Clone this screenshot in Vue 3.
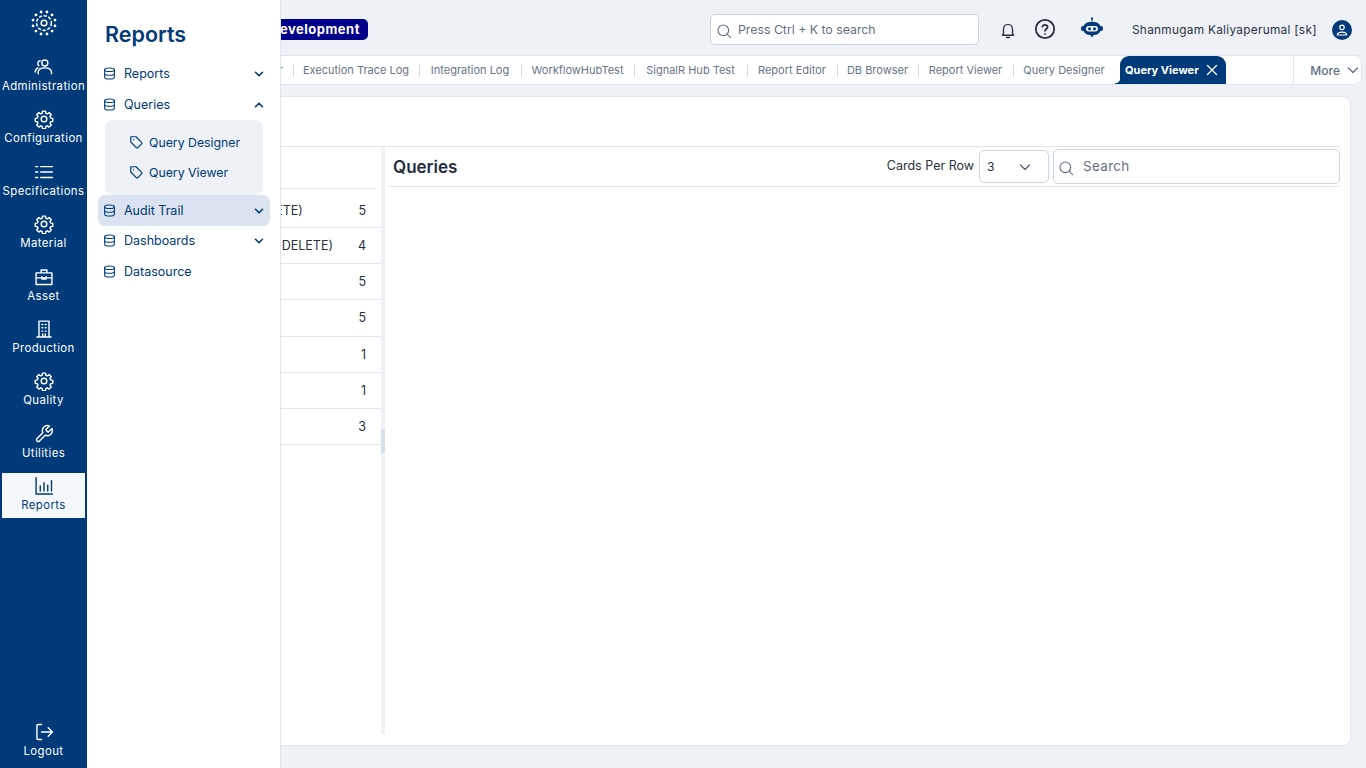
<script setup>
const dots = Array.from({ length: 12 }, (_, i) => {
  const a = (i * Math.PI) / 6 + Math.PI / 12
  return { x: 12 + 10.5 * Math.cos(a), y: 12 + 10.5 * Math.sin(a) }
})
const gear = 'M12 8.6a3.4 3.4 0 1 0 0 6.8 3.4 3.4 0 0 0 0-6.8zM10.2 2.5h3.6l.5 2.6 1.7.7 2.2-1.5 2.5 2.5-1.5 2.2.7 1.7 2.6.5v3.6l-2.6.5-.7 1.7 1.5 2.2-2.5 2.5-2.2-1.5-1.7.7-.5 2.6h-3.6l-.5-2.6-1.7-.7-2.2 1.5-2.5-2.5 1.5-2.2-.7-1.7-2.6-.5v-3.6l2.6-.5.7-1.7-1.5-2.2 2.5-2.5 2.2 1.5 1.7-.7z'
const rail = [
  { label: 'Administration', d: 'M13 3.5a3.6 3.6 0 1 1 0 7.2 3.6 3.6 0 0 1 0-7.2zM5 20v-1.5c0-3.4 3.4-5.5 8-5.5s8 2.1 8 5.500V20M7.500 4.500a3.200 3.200 0 0 0-1.600 5.800M4.800 13C2.800 13.800 1.500 15.500 1.500 18' },
  { label: 'Configuration', d: gear },
  { label: 'Specifications', d: 'M8 5.500h14M8 12h14M8 18.500h14M2 5.500h2.500M2 12h2.500M2 18.500h2.500' },
  { label: 'Material', d: gear },
  { label: 'Asset', d: 'M2.500 7h19v14h-19zM8.500 7V3.500h7V7M2.500 13h19M9.500 11.500v3h5v-3' },
  { label: 'Production', d: 'M6 2.500h12v19H6zM3.500 21.500h17M9.500 6.500h1M13.500 6.500h1M9.500 10.500h1M13.500 10.500h1M9.500 14.500h1M13.500 14.500h1M10.500 18v3.500M13.500 18v3.500' },
  { label: 'Quality', d: gear },
  { label: 'Utilities', d: 'M14.700 6.300a1 1 0 0 0 0 1.400l1.600 1.600a1 1 0 0 0 1.400 0l3.770-3.770a6 6 0 0 1-7.940 7.940l-6.910 6.910a2.120 2.120 0 0 1-3-3l6.910-6.910a6 6 0 0 1 7.940-7.940l-3.760 3.760z' },
  { label: 'Reports', d: 'M2.500 2v19.500H22M7.500 12v6M12 8v10M16.500 11v7M21 5.500V18', active: true },
]
const tabs = [
  { label: 'Execution Trace Log', w: 126 },
  { label: 'Integration Log', w: 102 },
  { label: 'WorkflowHubTest', w: 113 },
  { label: 'SignalR Hub Test', w: 113 },
  { label: 'Report Editor', w: 90 },
  { label: 'DB Browser', w: 81 },
  { label: 'Report Viewer', w: 95 },
  { label: 'Query Designer', w: 102 },
]
const rows = [
  { name: '(DELETE)', n: 5 },
  { name: '(NOT DELETE)', n: 4 },
  { name: '', n: 5 }, { name: '', n: 5 }, { name: '', n: 1 }, { name: '', n: 1 }, { name: '', n: 3 },
]
const menuTop = [{ label: 'Reports', chev: 'down' }, { label: 'Queries', chev: 'up' }]
const menuBottom = [
  { label: 'Audit Trail', chev: 'down', active: true },
  { label: 'Dashboards', chev: 'down' },
  { label: 'Datasource' },
]
const subs = ['Query Designer', 'Query Viewer']
</script>

<template>
  <div class="app">
    <nav class="rail">
      <div class="logo">
        <svg width="26" height="26" viewBox="0 0 24 24" fill="none" stroke="#fff" stroke-width="1.400">
          <circle v-for="(p, i) in dots" :key="i" :cx="p.x" :cy="p.y" r="1.300" fill="#fff" stroke="none" />
          <circle cx="12" cy="12" r="2.600" />
          <circle cx="12" cy="12" r="6.800" stroke-dasharray="3 1.500" />
        </svg>
      </div>
      <a v-for="r in rail" :key="r.label" class="rail-item" :class="{ on: r.active }">
        <svg width="20" height="20" viewBox="0 0 24 24" fill="none" stroke="currentColor" stroke-width="1.700" stroke-linecap="round" stroke-linejoin="round"><path :d="r.d" /></svg>
        <span>{{ r.label }}</span>
      </a>
      <a class="rail-item logout">
        <svg width="20" height="20" viewBox="0 0 24 24" fill="none" stroke="currentColor" stroke-width="1.700" stroke-linecap="round" stroke-linejoin="round"><path d="M9 3H5a1.500 1.500 0 0 0-1.500 1.500v15A1.500 1.500 0 0 0 5 21h4M9 12h13M17 7l5 5-5 5" /></svg>
        <span>Logout</span>
      </a>
    </nav>

    <main class="main">
      <header class="top">
        <span class="badge">Development</span>
        <div class="kbar">
          <svg class="mag" width="16" height="16" viewBox="0 0 24 24" fill="none" stroke="#5f6f86" stroke-width="1.700" stroke-linecap="round"><circle cx="11" cy="11" r="8" /><path d="M17 17l5 5" /></svg>
          <span>Press Ctrl + K to search</span>
        </div>
        <svg class="ic-bell" width="18" height="18" viewBox="0 0 24 24" fill="none" stroke="#26323f" stroke-width="1.800" stroke-linecap="round" stroke-linejoin="round"><path d="M6 17V10.500a6 6 0 0 1 12 0V17l1.500 2h-15zM10 22h4" /></svg>
        <svg class="ic-help" width="22" height="22" viewBox="0 0 24 24" fill="none" stroke="#26323f" stroke-width="2" stroke-linecap="round" stroke-linejoin="round"><circle cx="12" cy="12" r="10" /><path d="M9.200 9.300a2.900 2.900 0 0 1 5.600.9c0 1.900-2.800 2.300-2.800 3.800M12 17.500h.01" /></svg>
        <svg class="ic-bot" width="22" height="22" viewBox="0 0 22 22"><path d="M11 0.500v4" stroke="#003a78" stroke-width="1.200" /><circle cx="11" cy="1.500" r="1" fill="#003a78" /><rect x="2" y="5" width="18" height="13" rx="6.500" fill="#003a78" /><rect y="9" width="22" height="5" rx="2" fill="#003a78" /><path d="M9 17.500h4L11 20.500z" fill="#003a78" /><rect x="5" y="9" width="12" height="5.500" rx="2.700" fill="#eef1f6" /><circle cx="8.500" cy="11.700" r="1.500" fill="#003a78" /><circle cx="13.500" cy="11.700" r="1.500" fill="#003a78" /></svg>
        <span class="user">Shanmugam Kaliyaperumal [sk]</span>
        <span class="avatar">
          <svg width="14" height="14" viewBox="0 0 24 24" fill="none" stroke="#fff" stroke-width="2" stroke-linecap="round"><circle cx="12" cy="7.500" r="3.800" /><path d="M4 20.500c0-3.500 3.500-5 8-5s8 1.500 8 5z" /></svg>
        </span>
      </header>

      <div class="tabs">
        <div class="tab-list">
          <span class="tab">Query Designer</span>
          <span v-for="t in tabs" :key="t.label" class="tab" :style="{ width: t.w + 'px' }">{{ t.label }}</span>
          <span class="tab active">Query Viewer
            <svg width="12" height="12" viewBox="0 0 12 12" stroke="#fff" stroke-width="1.300" stroke-linecap="round"><path d="M1.500 1.500l9 9M10.500 1.500l-9 9" /></svg>
          </span>
        </div>
        <div class="more">More
          <svg width="12" height="12" viewBox="0 0 12 12" fill="none" stroke="#5f6f86" stroke-width="1.300" stroke-linecap="round" stroke-linejoin="round"><path d="M1.500 4l4.500 4.500L10.500 4" /></svg>
        </div>
      </div>

      <section class="card">
        <div class="card-head"></div>
        <div class="card-body">
          <div class="left">
            <div class="left-head"></div>
            <div v-for="(r, i) in rows" :key="i" class="row" :class="{ first: i === 0 }">
              <span class="row-name">{{ r.name }}</span>
              <span class="row-n">{{ r.n }}</span>
            </div>
          </div>
          <div class="splitter"><i></i></div>
          <div class="right">
            <div class="right-head">
              <h2>Queries</h2>
              <label>Cards Per Row</label>
              <div class="select">
                <span>3</span>
                <svg width="12" height="12" viewBox="0 0 12 12" fill="none" stroke="#4d5d74" stroke-width="1.200" stroke-linecap="round" stroke-linejoin="round"><path d="M1.500 4l4.500 4.500L10.500 4" /></svg>
              </div>
              <div class="search">
                <svg class="mag" width="16" height="16" viewBox="0 0 24 24" fill="none" stroke="#5f6f86" stroke-width="1.700" stroke-linecap="round"><circle cx="11" cy="11" r="8" /><path d="M17 17l5 5" /></svg>
                <span>Search</span>
              </div>
            </div>
          </div>
        </div>
      </section>
    </main>

    <aside class="flyout">
      <h1>Reports</h1>
      <template v-for="m in menuTop" :key="m.label">
        <a class="menu"><svg class="db" width="13" height="13" viewBox="0 0 24 24" fill="none" stroke="currentColor" stroke-width="2" stroke-linecap="round"><ellipse cx="12" cy="5" rx="9" ry="3.300" /><path d="M3 5v14c0 1.800 4 3.300 9 3.300s9-1.500 9-3.300V5M3 12c0 1.800 4 3.300 9 3.300s9-1.500 9-3.300" /></svg>
          <span>{{ m.label }}</span>
          <svg class="chev" :class="m.chev" width="10" height="10" viewBox="0 0 10 10" fill="none" stroke="currentColor" stroke-width="1.600" stroke-linecap="round" stroke-linejoin="round"><path d="M1.500 3.300L5 6.800l3.500-3.500" /></svg>
        </a>
      </template>
      <div class="subs">
        <a v-for="s in subs" :key="s" class="sub">
          <svg width="14" height="14" viewBox="0 0 24 24" fill="none" stroke="currentColor" stroke-width="2" stroke-linecap="round" stroke-linejoin="round"><path d="M3 3h9l9.500 9.500a2 2 0 0 1 0 2.800l-6.200 6.200a2 2 0 0 1-2.800 0L3 12zM8 8h.01" /></svg>
          <span>{{ s }}</span>
        </a>
      </div>
      <a v-for="m in menuBottom" :key="m.label" class="menu" :class="{ hot: m.active }">
        <svg class="db" width="13" height="13" viewBox="0 0 24 24" fill="none" stroke="currentColor" stroke-width="2" stroke-linecap="round"><ellipse cx="12" cy="5" rx="9" ry="3.300" /><path d="M3 5v14c0 1.800 4 3.300 9 3.300s9-1.500 9-3.300V5M3 12c0 1.800 4 3.300 9 3.300s9-1.500 9-3.300" /></svg>
        <span>{{ m.label }}</span>
        <svg v-if="m.chev" class="chev" width="10" height="10" viewBox="0 0 10 10" fill="none" stroke="currentColor" stroke-width="1.600" stroke-linecap="round" stroke-linejoin="round"><path d="M1.500 3.300L5 6.800l3.500-3.500" /></svg>
      </a>
    </aside>
  </div>
</template>

<style>
html, body { margin: 0; background: #eef1f6; }
</style>

<style scoped>
.app { display: flex; height: 768px; width: 1366px; overflow: hidden; position: relative; font-family: Inter, "Noto Sans", sans-serif; background: #eef1f6; color: #26323f; }

.rail { width: 87px; flex: none; background: #003a78; color: #fff; display: flex; flex-direction: column; align-items: center; padding-top: 10px; box-sizing: border-box; }
.logo { height: 26px; margin-bottom: 21px; }
.rail-item { width: 83px; height: 52.400px; flex: none; display: flex; flex-direction: column; align-items: center; justify-content: flex-start; gap: 1px; font-size: 11.400px; line-height: 16px; letter-spacing: 0.400px; white-space: nowrap; box-sizing: border-box; }
.rail-item.on { background: #f5f8fb; color: #003a78; height: 45px; margin-top: -3px; padding-top: 3px; }
.logout { margin-top: auto; margin-bottom: 9px; height: auto; }

.main { flex: 1; min-width: 0; display: flex; flex-direction: column; }
.top { height: 55px; flex: none; display: flex; align-items: center; box-sizing: border-box; padding-top: 4px; position: relative; }
.badge { margin-left: 175px; background: #00008b; color: #fff; height: 21px; width: 106px; border-radius: 5px; font-size: 13px; font-weight: 700; line-height: 21px; text-align: center; letter-spacing: 0.500px; }
.kbar { margin-left: 342px; width: 269px; height: 31px; box-sizing: border-box; background: #fff; border: 1px solid #c9d4e6; border-radius: 5px; display: flex; align-items: center; gap: 6px; padding-left: 5px; font-size: 12.300px; color: #5f6f86; }
.kbar span { margin-top: -1px; }
.mag { margin-top: 3px; flex: none; }
.ic-bell { margin-left: 20px; }
.ic-help { margin-left: 17px; margin-top: -1px; }
.ic-bot { margin-left: 25px; margin-top: -3px; }
.user { margin-left: 29px; font-size: 11.800px; letter-spacing: 0.300px; color: #26323f; white-space: nowrap; width: 190px; }
.avatar { margin-left: 10px; width: 20px; height: 20px; border-radius: 50%; background: #003a78; display: flex; align-items: center; justify-content: center; }

.tabs { margin-right: 4px; height: 30px; flex: none; box-sizing: border-box; background: #fff; border: 1px solid #dfe5ee; border-radius: 8px; display: flex; justify-content: space-between; overflow: hidden; }
.tab-list { display: flex; align-items: stretch; justify-content: flex-end; width: 1138px; flex: none; }
.tab { display: flex; align-items: center; justify-content: center; flex: none; box-sizing: border-box; font-size: 11px; color: #66758b; padding: 0 10px 1px; white-space: nowrap; position: relative; }
.tab::before { content: ""; position: absolute; left: 0; top: 8px; height: 13px; width: 1px; background: #d5dce6; }
.tab.active { background: #003a78; color: #fff; font-weight: 700; font-size: 11px; border-radius: 9px 9px 0 0; padding: 0 8px 1px 5px; gap: 7px; margin-left: 5px; width: 106px; justify-content: flex-start; }
.tab.active::before { display: none; }
.tab.active::after { content: ""; position: absolute; left: -5px; bottom: 0; width: 5px; height: 6px; background: radial-gradient(circle at 0 0, #fff 5px, #003a78 5.500px); }
.more { width: 68px; box-sizing: border-box; border-left: 1px solid #dfe5ee; display: flex; align-items: center; justify-content: flex-end; gap: 7px; padding-right: 2px; font-size: 12px; font-weight: 500; color: #5f6f86; }

.card { margin: 11px 15px 22px 8px; flex: 1; min-height: 0; background: #fff; border: 1px solid #dfe5ee; border-radius: 8px; display: flex; flex-direction: column; padding-right: 10px; }
.card-head { height: 49px; flex: none; border-bottom: 1px solid #dfe5ee; }
.card-body { flex: 1; min-height: 0; display: flex; padding-bottom: 11px; }
.left { width: 285px; flex: none; }
.left-head { height: 41px; border-bottom: 1px solid #dfe5ee; margin-right: 5px; }
.row { height: 36.200px; box-sizing: border-box; border-bottom: 1px solid #dfe5ee; display: flex; align-items: center; justify-content: space-between; padding: 0 15px 0 151px; font-size: 12.500px; color: #26323f; }
.row.first { height: 39px; padding-top: 4px; }
.row-name { white-space: nowrap; }
.splitter { width: 4px; flex: none; background: #eef1f6; position: relative; display: flex; align-items: center; }
.splitter i { display: block; width: 4px; height: 24px; background: #d6e0ec; }
.right { flex: 1; min-width: 0; margin-left: 3px; }
.right-head { height: 40px; box-sizing: border-box; border-bottom: 1px solid #dfe5ee; display: flex; align-items: center; padding-left: 5px; }
.right-head h2 { margin: 0 auto 0 0; font-size: 17px; font-weight: 600; color: #1f2d3d; }
.right-head label { font-size: 12.500px; color: #26323f; margin: -2px 5px 0 0; }
.select { width: 70px; height: 33px; box-sizing: border-box; border: 1px solid #c9d4e6; border-radius: 5px; display: flex; align-items: center; justify-content: space-between; padding: 0 17px 0 7px; font-size: 12px; color: #26323f; }
.search { width: 287px; height: 35px; margin-left: 4px; box-sizing: border-box; border: 1px solid #c9d4e6; border-radius: 5px; display: flex; align-items: center; gap: 9px; padding-left: 4px; font-size: 13.500px; letter-spacing: 0.300px; color: #5f6f86; }
.search span { margin-top: -2px; }

.flyout { position: absolute; left: 87px; top: 0; bottom: 0; width: 194px; box-sizing: border-box; background: #fff; border-right: 1px solid #dfe5ee; padding: 19px 10px 0 11px; color: #003a78; }
.flyout h1 { margin: 0 0 9px 7px; font-size: 21.500px; line-height: 30px; font-weight: 600; }
.menu { display: flex; align-items: center; height: 31px; padding: 0 6px 0 5px; gap: 8px; font-size: 12.500px; border-radius: 7px; }
.menu .chev { margin-left: auto; }
.chev.up { transform: rotate(180deg); }
.menu.hot { background: #dae3ef; }
.menu.hot + .menu { height: 29px; margin-bottom: 1px; }
.subs { margin: 0 7px; height: 75px; box-sizing: border-box; background: #eef1f6; border-radius: 8px; padding: 7px 0 0 24px; }
.sub { display: flex; align-items: center; gap: 6px; height: 30px; font-size: 12.300px; }
</style>
